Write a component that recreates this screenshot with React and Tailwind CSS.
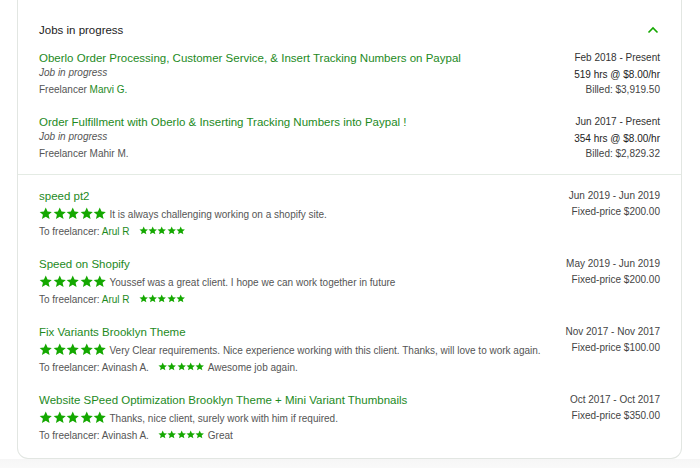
import React from "react";

const GREEN_TEXT = "text-[#1d8a1d]";

function Star({ size }) {
  return (
    <svg width={size} height={size} viewBox="0 0 24 24" className="shrink-0">
      <path
        fill="#14a800"
        d="M12 1l3.2 7 7.6.7-5.8 5.1 1.8 7.5L12 17.4l-6.8 3.9 1.8-7.5L1.2 8.7l7.6-.7z"
      />
    </svg>
  );
}

function Stars({ size }) {
  return (
    <span className="flex items-center">
      {[0, 1, 2, 3, 4].map((i) => (
        <Star key={i} size={size} />
      ))}
    </span>
  );
}

const jobs = [
  {
    title: "Oberlo Order Processing, Customer Service, & Insert Tracking Numbers on Paypal",
    freelancer: "Marvi G.",
    link: true,
    date: "Feb 2018 - Present",
    hrs: "519 hrs @ $8.00/hr",
    billed: "Billed: $3,919.50",
  },
  {
    title: "Order Fulfillment with Oberlo & Inserting Tracking Numbers into Paypal !",
    freelancer: "Mahir M.",
    link: false,
    date: "Jun 2017 - Present",
    hrs: "354 hrs @ $8.00/hr",
    billed: "Billed: $2,829.32",
  },
];

const reviews = [
  {
    title: "speed pt2",
    comment: "It is always challenging working on a shopify site.",
    to: "Arul R",
    link: true,
    fb: "",
    date: "Jun 2019 - Jun 2019",
    price: "Fixed-price $200.00",
  },
  {
    title: "Speed on Shopify",
    comment: "Youssef was a great client. I hope we can work together in future",
    to: "Arul R",
    link: true,
    fb: "",
    date: "May 2019 - Jun 2019",
    price: "Fixed-price $200.00",
  },
  {
    title: "Fix Variants Brooklyn Theme",
    comment: "Very Clear requirements. Nice experience working with this client. Thanks, will love to work again.",
    to: "Avinash A.",
    link: false,
    fb: "Awesome job again.",
    date: "Nov 2017 - Nov 2017",
    price: "Fixed-price $100.00",
  },
  {
    title: "Website SPeed Optimization Brooklyn Theme + Mini Variant Thumbnails",
    comment: "Thanks, nice client, surely work with him if required.",
    to: "Avinash A.",
    link: false,
    fb: "Great",
    date: "Oct 2017 - Oct 2017",
    price: "Fixed-price $350.00",
  },
];

export default function App() {
  return (
    <div
      className="w-[700px] h-[468px] overflow-hidden bg-white"
      style={{ fontFamily: '"Liberation Sans", Arial, sans-serif' }}
    >
      <div className="ml-[17px] w-[665px] border-x border-b border-[#e2e6e2] rounded-b-[11px] bg-white">
        <div className="pl-[21px] pr-[21px] pt-[22px] pb-[12px]">
          <div className="flex items-center justify-between h-4">
            <span className="text-[11.5px] leading-4 text-[#222]">Jobs in progress</span>
            <svg width="12" height="8" viewBox="0 0 12 8" className="mr-[1px]">
              <path d="M1.5 6.5L6 2l4.5 4.5" fill="none" stroke="#14a800" strokeWidth="1.6" />
            </svg>
          </div>
          <div className="mt-3 flex flex-col gap-4">
            {jobs.map((j) => (
              <div key={j.title} className="flex justify-between">
                <div className="flex flex-col">
                  <span className={`text-[11.5px] leading-4 ${GREEN_TEXT}`}>{j.title}</span>
                  <span className="text-[10px] leading-[14px] italic text-[#555]">Job in progress</span>
                  <span className="mt-[2px] text-[10px] leading-4 text-[#555]">
                    Freelancer{" "}
                    <span className={j.link ? GREEN_TEXT : ""}>{j.freelancer}</span>
                  </span>
                </div>
                <div className="flex flex-col items-end text-[10px] text-[#333]">
                  <span className="leading-4">{j.date}</span>
                  <span className="mt-[1px] leading-4 text-[#222]">{j.hrs}</span>
                  <span className="leading-[14px] text-[#444]">{j.billed}</span>
                </div>
              </div>
            ))}
          </div>
        </div>
        <div className="h-px bg-[#e4ebe4]" />
        <div className="pl-[21px] pr-[21px] pt-[13px] pb-[15px] flex flex-col gap-[17px]">
          {reviews.map((r) => (
            <div key={r.title} className="flex justify-between">
              <div className="flex flex-col">
                <span className={`text-[11.5px] leading-4 ${GREEN_TEXT}`}>{r.title}</span>
                <div className="mt-[1px] flex items-center h-[18px] gap-[3px]">
                  <Stars size={13.5} />
                  <span className="text-[10px] text-[#555]">{r.comment}</span>
                </div>
                <div className="flex items-center h-4 text-[10px] text-[#555]">
                  <span>
                    To freelancer: <span className={r.link ? GREEN_TEXT : ""}>{r.to}</span>
                  </span>
                  <span className="ml-[9px] flex items-center gap-[3px]">
                    <Stars size={9.4} />
                    {r.fb && <span>{r.fb}</span>}
                  </span>
                </div>
              </div>
              <div className="flex flex-col items-end text-[10px] text-[#444]">
                <span className="leading-4">{r.date}</span>
                <span className="leading-4">{r.price}</span>
              </div>
            </div>
          ))}
        </div>
      </div>
      <div className="h-[11px] bg-gradient-to-b from-[#f6f6f6] to-[#fafafa]" />
    </div>
  );
}
